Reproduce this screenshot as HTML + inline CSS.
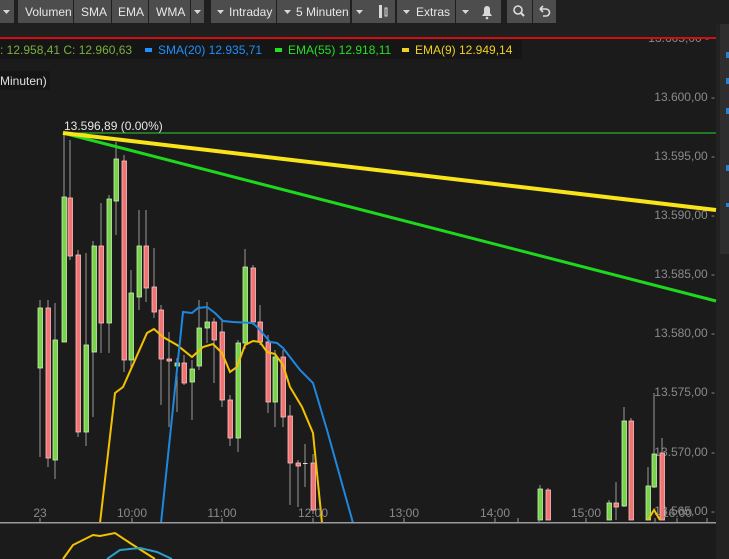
<!DOCTYPE html>
<html><head><meta charset="utf-8"><style>
html,body{margin:0;padding:0;background:#1c1b1b;width:729px;height:559px;overflow:hidden;font-family:"Liberation Sans",sans-serif}
svg{display:block}
</style></head><body>
<svg width="729" height="559" viewBox="0 0 729 559" xmlns="http://www.w3.org/2000/svg" font-family="Liberation Sans, sans-serif">
<rect width="729" height="559" fill="#1c1b1b"/>
<text x="709" y="42" font-size="12" fill="#8a8a8a" text-anchor="end">13.605,00 -</text>
<!-- toolbar -->
<rect x="0" y="0" width="729" height="37" fill="#1f1f1f"/>
<g fill="#4d4d4d">
<rect x="0" y="0" width="14" height="23"/>
<rect x="18" y="0" width="55" height="23"/>
<rect x="74" y="0" width="37" height="23"/>
<rect x="112" y="0" width="36" height="23"/>
<rect x="149" y="0" width="41" height="23"/>
<rect x="191" y="0" width="13" height="23"/>
<rect x="211" y="0" width="65" height="23"/>
<rect x="277" y="0" width="73" height="23"/>
<rect x="352" y="0" width="43" height="23"/>
<rect x="397" y="0" width="58" height="23"/>
<rect x="456" y="0" width="45" height="23"/>
<rect x="507" y="0" width="25" height="23"/>
<rect x="533" y="0" width="23" height="23"/>
</g>
<g fill="#e8e8e8" font-size="12">
<text x="25" y="16">Volumen</text>
<text x="81" y="16">SMA</text>
<text x="118" y="16">EMA</text>
<text x="156" y="16">WMA</text>
<text x="229" y="16">Intraday</text>
<text x="296" y="16">5 Minuten</text>
<text x="416" y="16">Extras</text>
</g>
<g fill="#d8d8d8">
<path d="M3 10h7l-3.5 4z"/><path d="M194 10h7l-3.5 4z"/><path d="M217 10h7l-3.5 4z"/>
<path d="M284 10h7l-3.5 4z"/><path d="M356 10h7l-3.5 4z"/><path d="M403 10h7l-3.5 4z"/><path d="M462 10h7l-3.5 4z"/>
<rect x="379" y="5" width="3" height="13"/><rect x="385" y="8" width="2" height="8" fill="none" stroke="#d8d8d8"/>
<path d="M482 16h10l-2-3v-4a3 3 0 0 0-6 0v4z"/><circle cx="487" cy="18" r="1.3"/>
</g>
<circle cx="518" cy="10" r="4" fill="none" stroke="#ddd" stroke-width="1.6"/><path d="M521 13l3 3" stroke="#ddd" stroke-width="2"/>
<path d="M540 9h6a3.5 3.5 0 0 1 0 7h-3M540 9l3-3M540 9l3 3" fill="none" stroke="#ddd" stroke-width="1.6"/>
<!-- right panel -->
<rect x="716" y="24" width="13" height="535" fill="#222"/>
<rect x="720" y="24" width="9" height="230" fill="#2e2e2e"/>
<g fill="#2a7fd0"><rect x="726" y="52" width="3" height="6"/><rect x="726" y="78" width="3" height="6"/><rect x="726" y="108" width="3" height="6"/><rect x="726" y="165" width="3" height="6"/><rect x="726" y="203" width="3" height="4"/></g>
<!-- red top line -->
<rect x="0" y="37" width="716" height="2" fill="#d01010"/>
<!-- price labels -->
<g fill="#8a8a8a" font-size="12" text-anchor="end">
<text x="715" y="101">13.600,00 -</text>
<text x="715" y="160">13.595,00 -</text>
<text x="715" y="219">13.590,00 -</text>
<text x="715" y="278">13.585,00 -</text>
<text x="715" y="337">13.580,00 -</text>
<text x="715" y="396">13.575,00 -</text>
<text x="715" y="456">13.570,00 -</text>
<text x="715" y="515">13.565,00 -</text>
</g>
<!-- legend -->
<rect x="0" y="40" width="522" height="19" fill="#151515"/>
<g font-size="12">
<text x="0" y="54" fill="#78b040">: 12.958,41  C: 12.960,63</text>
<rect x="145" y="48" width="7" height="4" fill="#1e90ff"/>
<text x="158" y="54" fill="#1e90ff">SMA(20)  12.935,71</text>
<rect x="275" y="48" width="7" height="4" fill="#22e022"/>
<text x="288" y="54" fill="#22e022">EMA(55)  12.918,11</text>
<rect x="402" y="48" width="7" height="4" fill="#f0d020"/>
<text x="415" y="54" fill="#f0d020">EMA(9)  12.949,14</text>
</g>
<rect x="0" y="71" width="50" height="19" fill="#151515"/>
<text x="0" y="85" font-size="12" fill="#e0e0e0">Minuten)</text>
<!-- wicks -->
<g stroke="#9a9a9a" stroke-width="1">
<path d="M40 300v157M48 300v167M55 303v176M64 133v209M70 140v120M78 250v187M86 253v193M93 241v176M101 203v150M109 195v158M116 142v93M124 155v217M131 270v100M139 210v100M146 210v92M154 248v70M161 305v100M169 332v95M177 358v54M184 355v30M192 360v60M199 300v70M207 302v41M214 318v65M222 320v87M230 395v51M238 340v112M245 249v100M253 265v60M260 305v40M268 335v78M275 350v77M283 350v77M290 405v100M298 460v47M305 444v43M313 454v60M540 485v35M548 488v32M609 500v20M616 482v38M624 407v100M631 418v102M648 467v53M654 393v95M662 438v82"/>
</g>
<!-- green candles -->
<g fill="#78d24a" stroke="#c8f0b0" stroke-width="0.8">
<rect x="38" y="308" width="4.5" height="60"/><rect x="53" y="340" width="4.5" height="120"/>
<rect x="62" y="197" width="4.5" height="145"/><rect x="84" y="345" width="4.5" height="87"/>
<rect x="92" y="246" width="4.5" height="106"/><rect x="107" y="199" width="4.5" height="124"/>
<rect x="114" y="159" width="4.5" height="42"/><rect x="129" y="293" width="4.5" height="67"/>
<rect x="137" y="246" width="4.5" height="51"/><rect x="175" y="363" width="4.5" height="3"/>
<rect x="190" y="369" width="4.5" height="13"/><rect x="197" y="328" width="4.5" height="38"/>
<rect x="205" y="322" width="4.5" height="6"/><rect x="236" y="343" width="4.5" height="95"/>
<rect x="243" y="267" width="4.5" height="76"/><rect x="273" y="357" width="4.5" height="45"/>
<rect x="538" y="489" width="4.5" height="31"/><rect x="607" y="503" width="4.5" height="17"/>
<rect x="622" y="421" width="4.5" height="85"/><rect x="646" y="486" width="4.5" height="34"/>
<rect x="652" y="454" width="4.5" height="33"/>
</g>
<!-- red candles -->
<g fill="#f07474" stroke="#ffc0c0" stroke-width="0.8">
<rect x="46" y="308" width="4.5" height="150"/><rect x="68" y="198" width="4.5" height="58"/>
<rect x="76" y="255" width="4.5" height="177"/><rect x="99" y="246" width="4.5" height="77"/>
<rect x="122" y="161" width="4.5" height="199"/><rect x="144" y="246" width="4.5" height="42"/>
<rect x="152" y="287" width="4.5" height="25"/><rect x="159" y="310" width="4.5" height="49"/>
<rect x="167" y="359" width="4.5" height="2"/><rect x="182" y="363" width="4.5" height="20"/>
<rect x="212" y="322" width="4.5" height="18"/><rect x="220" y="332" width="4.5" height="68"/>
<rect x="228" y="400" width="4.5" height="38"/><rect x="251" y="268" width="4.5" height="54"/>
<rect x="258" y="322" width="4.5" height="20"/><rect x="266" y="342" width="4.5" height="60"/>
<rect x="281" y="357" width="4.5" height="60"/><rect x="288" y="416" width="4.5" height="47"/>
<rect x="296" y="463" width="4.5" height="3"/><rect x="311" y="463" width="4.5" height="47"/>
<rect x="546" y="490" width="4.5" height="30"/><rect x="614" y="503" width="4.5" height="4"/>
<rect x="629" y="421" width="4.5" height="99"/><rect x="660" y="453" width="4.5" height="67"/>
</g>
<rect x="303" y="463" width="4.5" height="1" fill="#ddd"/>
<!-- MA lines -->
<polyline fill="none" stroke="#f2c200" stroke-width="2" points="100,523 115,393 123,387 147,333 154,329 163,337 177,345 192,357 203,347 213,344 222,353 230,372 237,367 245,345 253,341 260,342 267,352 275,354 283,365 290,387 302,407 313,433 322,523"/>
<polyline fill="none" stroke="#1e88e0" stroke-width="2" points="161,523 183,312 192,313 198,308 207,307 215,313 223,321 233,322 253,323 260,330 270,342 277,343 283,348 300,370 313,383 327,430 353,523"/>
<polyline fill="none" stroke="#f2c200" stroke-width="2" points="648,520 654,510 660,520"/>
<!-- trend lines -->
<line x1="63" y1="133" x2="716" y2="133" stroke="#2ed02e" stroke-width="1"/>
<line x1="63" y1="133" x2="716" y2="301" stroke="#1ed81e" stroke-width="3"/>
<line x1="63" y1="133" x2="716" y2="210" stroke="#f8e418" stroke-width="4"/>
<text x="64" y="130" font-size="12" fill="#e6e6e6">13.596,89 (0.00%)</text>
<!-- time axis -->
<rect x="0" y="522" width="716" height="1.5" fill="#9a9a9a"/>
<g stroke="#9a9a9a"><path d="M40 518v4M132 518v4M222 518v4M313 518v4M404 518v4M495 518v4M586 518v4M677 518v4M518 518v4M539 518v4M655 518v4M707 518v4"/></g>
<g fill="#8a8a8a" font-size="12" text-anchor="middle">
<text x="40" y="517">23</text><text x="132" y="517">10:00</text><text x="222" y="517">11:00</text>
<text x="313" y="517">12:00</text><text x="404" y="517">13:00</text><text x="495" y="517">14:00</text>
<text x="586" y="517">15:00</text><text x="677" y="517">16:00</text>
</g>
<!-- lower indicator -->
<polyline fill="none" stroke="#f2c200" stroke-width="2" points="63,559 73,545 93,535 100,536 115,533 130,543 155,559"/>
<polyline fill="none" stroke="#2aa0c8" stroke-width="2" points="107,559 120,550 140,548 157,552 172,559"/>
</svg>
</body></html>
